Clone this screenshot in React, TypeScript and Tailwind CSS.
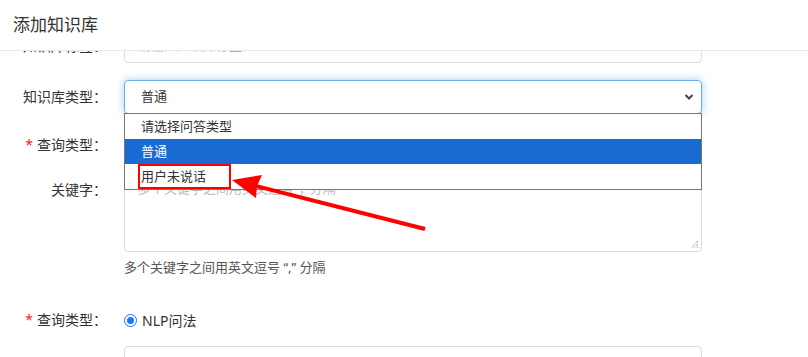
const labelCls = "w-[107px] shrink-0 text-right text-[14px] leading-[20px] text-[#333]";

function Label({ text, req }: { text: string; req?: boolean }) {
  return (
    <div className={labelCls}>
      {req && <span className="text-[#f5222d] mr-[4px]">*</span>}
      {text}：
    </div>
  );
}

export default function App() {
  const options = [
    { id: 1, text: "请选择问答类型" },
    { id: 2, text: "普通", active: true },
    { id: 3, text: "用户未说话", mark: true },
  ];

  return (
    <div className="relative w-[808px] h-[357px] overflow-hidden bg-white font-['Noto_Sans','Noto_Sans_CJK_SC',sans-serif] text-[#333]">
      <div className="h-[51px] border-b border-[#e8e8e8] flex items-center pl-[13px] text-[17px] leading-[24px] text-[#333]">
        添加知识库
      </div>

      <div className="h-[306px] overflow-hidden">
        <div className="-mt-[22px] w-[702px] flex flex-col">
          {/* row 1 */}
          <div className="flex items-center gap-[17px] h-[34px]">
            <Label text="知识库标签" />
            <div className="flex-1 h-[34px] border border-[#ddd] rounded-[4px] px-[13px] flex items-center text-[13px] text-[#aaa]">
              请输入知识库标签
            </div>
          </div>

          {/* row 2 */}
          <div className="flex items-center gap-[17px] h-[34px] mt-[17px] relative z-10">
            <Label text="知识库类型" />
            <div className="relative flex-1 h-[34px]">
              <div className="h-[34px] border border-[#66afe9] rounded-[4px] shadow-[0_0_8px_rgba(102,175,233,0.6)] pl-[16px] pr-[8px] flex items-center justify-between text-[13px] text-[#333]">
                <span>普通</span>
                <svg width="10" height="8" viewBox="0 0 10 8" className="mr-[-1px]">
                  <path d="M1.5 2 L5 5.5 L8.5 2" stroke="#444" strokeWidth="2" fill="none" />
                </svg>
              </div>
              <div className="absolute left-0 right-0 top-[33px] border border-[#767676] bg-white">
                {options.map((o) => (
                  <div
                    key={o.id}
                    className={
                      o.active
                        ? "relative h-[25px] pl-[16px] flex items-center text-[13px] bg-[#1a6ad3] text-white"
                        : "relative h-[25px] pl-[16px] flex items-center text-[13px] text-[#333]"
                    }
                  >
                    {o.text}
                    {o.mark && (
                      <div className="absolute left-[13px] top-0 w-[93px] h-[25px] border-2 border-[#ff0000]" />
                    )}
                  </div>
                ))}
              </div>
            </div>
          </div>

          {/* row 3, under dropdown */}
          <div className="flex items-center gap-[17px] h-[28px] mt-[17px]">
            <Label text="查询类型" req />
            <div className="flex-1 text-[14px]">普通问法</div>
          </div>

          {/* row 4 */}
          <div className="flex items-start gap-[17px] mt-[11px]">
            <div className="pt-[10px]">
              <Label text="关键字" />
            </div>
            <div className="relative flex-1 h-[82px] border border-[#ddd] rounded-[4px] px-[13px] pt-[8px] text-[13px] leading-[18px] text-[#bbb]">
              多个关键字之间用英文逗号“，”分隔
              <svg width="10" height="10" viewBox="0 0 10 10" className="absolute right-[2px] bottom-[2px]">
                <path d="M9 2 L2 9 M9 5 L5 9 M9 8 L8 9" stroke="#777" strokeWidth="1" strokeDasharray="1 1" />
              </svg>
            </div>
          </div>
          <div className="pl-[124px] mt-[5px] text-[13px] leading-[20px] text-[#555]">
            多个关键字之间用英文逗号 “,” 分隔
          </div>

          {/* row 5 */}
          <div className="flex items-center gap-[17px] h-[28px] mt-[29px]">
            <Label text="查询类型" req />
            <div className="flex items-center gap-[5px] text-[14px] text-[#333]">
              <span className="w-[13px] h-[13px] rounded-full border border-[#1677ff] flex items-center justify-center">
                <span className="w-[7px] h-[7px] rounded-full bg-[#1677ff]" />
              </span>
              NLP问法
            </div>
          </div>

          {/* row 6 */}
          <div className="flex items-start gap-[17px] mt-[12px]">
            <div className="w-[107px] shrink-0" />
            <div className="flex-1 h-[34px] border border-[#ddd] rounded-[4px] px-[13px] pt-[7px] text-[13px] text-[#aaa]">
              多个问法之间用英文逗号“，”分隔
            </div>
          </div>
        </div>
      </div>

      <svg className="absolute inset-0 z-20 pointer-events-none" width="808" height="357">
        <line x1="252" y1="185" x2="425" y2="229" stroke="#ff0000" strokeWidth="4" />
        <polygon points="232,180 262,175 257,186 256,198" fill="#ff0000" />
      </svg>
    </div>
  );
}
